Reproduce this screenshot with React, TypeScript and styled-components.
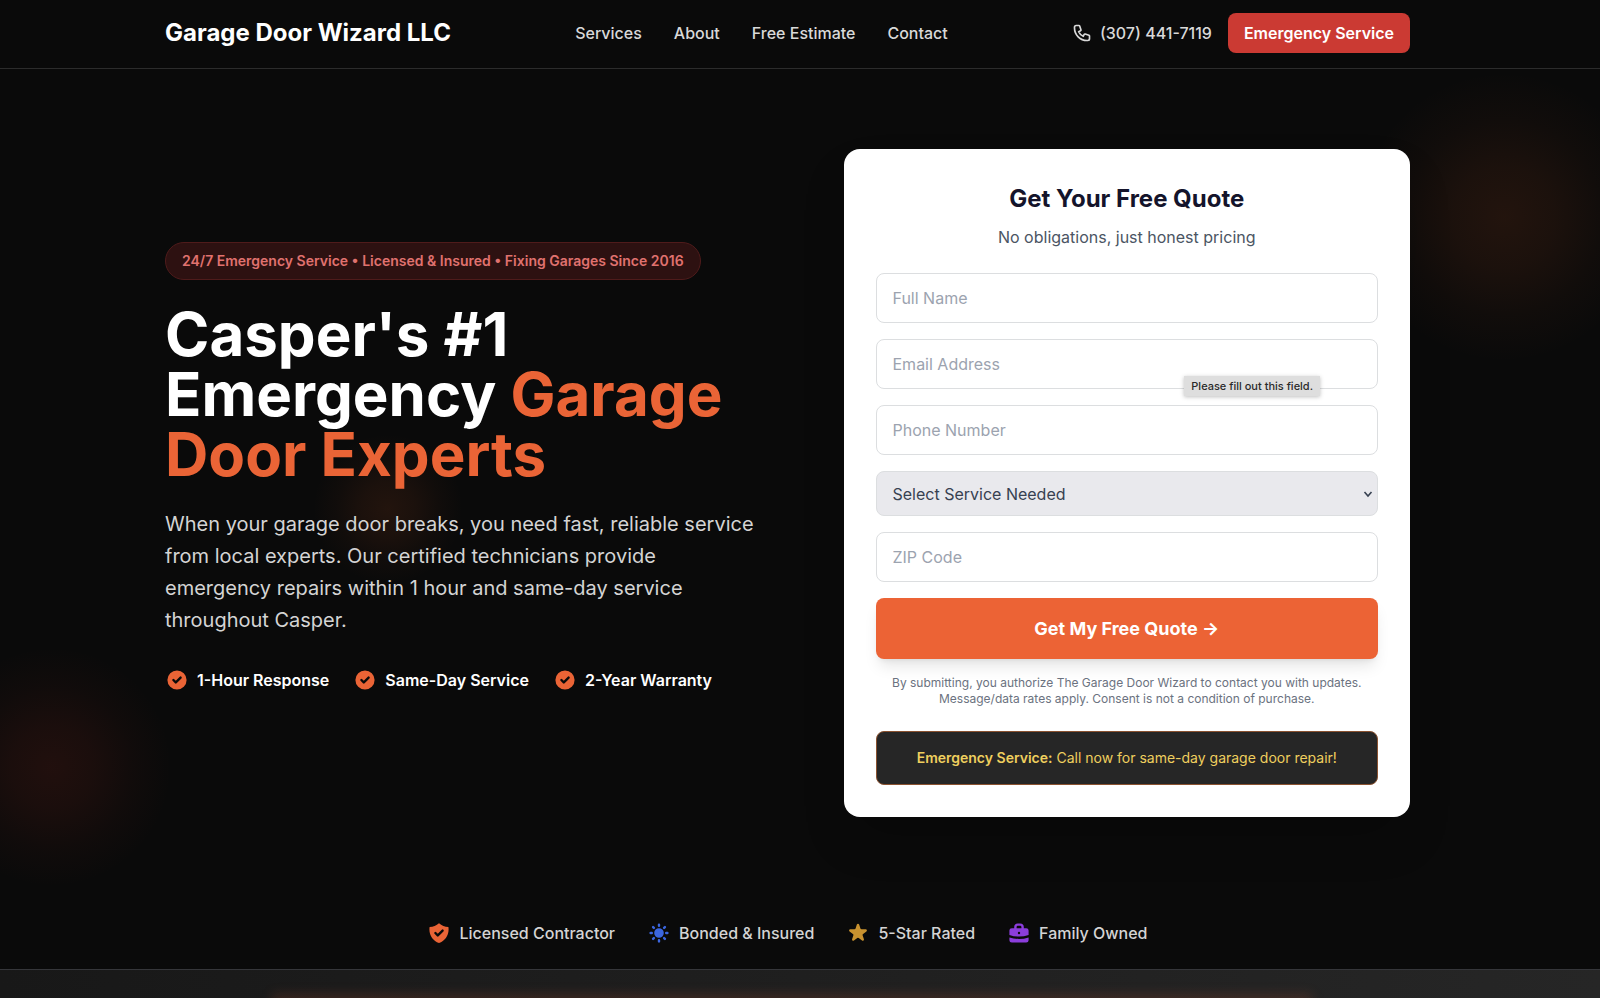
import React, { useState } from "react";
import styled, { createGlobalStyle, css } from "styled-components";

const GlobalStyle = createGlobalStyle`
  *, *::before, *::after { box-sizing: border-box; }
  body {
    margin: 0;
    background: #0a0a0a;
    color: #fff;
    font-family: Inter, "Liberation Sans", sans-serif;
    font-size: 16px;
    line-height: 24px;
    overflow-x: hidden;
  }
  h1, h2, p, ul { margin: 0; padding: 0; }
  a { color: inherit; text-decoration: none; }
  button, input, select { font: inherit; }
`;

const Page = styled.div`
  height: 100vh;
  overflow: hidden;
`;

const Container = styled.div`
  width: 100%;
  max-width: 1600px;
  margin: 0 auto;
  padding: 0 190px 0 165px;

  @media (max-width: 1400px) {
    padding: 0 32px;
  }
`;

const Header = styled.header`
  background: #0a0a0a;
  border-bottom: 1px solid #2c2c2c;
`;

const HeaderRow = styled(Container)`
  display: flex;
  align-items: center;
  justify-content: space-between;
  padding-top: 13px;
  padding-bottom: 15px;
`;

const Brand = styled.a`
  font-size: 24px;
  line-height: 32px;
  font-weight: 700;
`;

const Nav = styled.nav`
  display: flex;
  gap: 32px;
  color: #d9d9d9;
  font-weight: 500;
`;

const HeaderActions = styled.div`
  display: flex;
  align-items: center;
  gap: 16px;
`;

const PhoneLink = styled.a`
  display: flex;
  align-items: center;
  gap: 8px;
  color: #d9d9d9;
  font-weight: 500;
`;

const EmergencyButton = styled.button`
  border: 0;
  border-radius: 8px;
  padding: 8px 16px;
  background: #cb3a33;
  color: #fff;
  font-weight: 600;
`;

const Hero = styled.section`
  position: relative;
  overflow: hidden;
`;

const Glow = styled.div<{ $x: string; $y: string; $size: number; $rgb: string }>`
  position: absolute;
  left: ${(p) => p.$x};
  top: ${(p) => p.$y};
  width: ${(p) => p.$size}px;
  height: ${(p) => p.$size}px;
  transform: translate(-50%, -50%);
  border-radius: 50%;
  background: radial-gradient(
    closest-side,
    rgba(${(p) => p.$rgb}, 0.11),
    rgba(${(p) => p.$rgb}, 0.08) 35%,
    rgba(${(p) => p.$rgb}, 0.03) 68%,
    rgba(${(p) => p.$rgb}, 0)
  );
  pointer-events: none;
`;

const HeroGrid = styled(Container)`
  position: relative;
  display: grid;
  grid-template-columns: minmax(0, 590fr) minmax(0, 566fr);
  align-items: center;
  gap: 88px;
  padding-top: 80px;
  padding-bottom: 80px;

  @media (max-width: 1000px) {
    grid-template-columns: 1fr;
  }
`;

const Intro = styled.div`
  display: flex;
  flex-direction: column;
  align-items: flex-start;
  padding-bottom: 32px;
`;

const Badge = styled.p`
  padding: 8px 16px;
  border: 1px solid #4f1b1b;
  border-radius: 20px;
  background: #2d1111;
  color: #e0726f;
  font-size: 14px;
  line-height: 20px;
  font-weight: 600;
`;

const Headline = styled.h1`
  margin: 24px 0;
  font-size: 60px;
  line-height: 60px;
  font-weight: 700;
`;

const Accent = styled.span`
  color: #ea6436;
`;

const Lead = styled.p`
  margin-bottom: 32px;
  color: #d4d4d4;
  font-size: 20px;
  line-height: 32px;
`;

const InlineList = styled.ul<{ $gap: number }>`
  display: flex;
  flex-wrap: wrap;
  gap: 16px ${(p) => p.$gap}px;
  list-style: none;
`;

const InlineItem = styled.li<{ $muted?: boolean }>`
  display: flex;
  align-items: center;
  gap: 8px;
  color: ${(p) => (p.$muted ? "#d4d4d4" : "#fff")};
  font-weight: ${(p) => (p.$muted ? 500 : 600)};
`;

const Card = styled.form`
  padding: 32px;
  border-radius: 16px;
  background: #fff;
  color: #14142b;
  text-align: center;
  box-shadow: 0 25px 50px -12px rgba(0, 0, 0, 0.25);
`;

const CardTitle = styled.h2`
  margin-bottom: 8px;
  font-size: 24px;
  line-height: 36px;
  font-weight: 700;
`;

const CardSubtitle = styled.p`
  margin-bottom: 24px;
  color: #4b5563;
`;

const Fields = styled.div`
  display: flex;
  flex-direction: column;
  gap: 16px;
`;

const Field = styled.div`
  position: relative;
  display: flex;
`;

const control = css`
  width: 100%;
  border: 1px solid #dcdee0;
  border-radius: 8px;
  color: #374151;
`;

const TextInput = styled.input`
  ${control}
  padding: 12px 16px;
  background: #fff;

  &::placeholder {
    color: #9ca3af;
    opacity: 1;
  }
`;

const Select = styled.select`
  ${control}
  appearance: none;
  height: 45px;
  padding: 0 32px 0 16px;
  background: #e9e9ed;
`;

const Chevron = styled.svg`
  position: absolute;
  right: 5px;
  top: 18px;
  pointer-events: none;
`;

const Tooltip = styled.span`
  position: absolute;
  z-index: 1;
  right: 58px;
  top: 37px;
  padding: 2px 7px;
  background: #dedede;
  color: #2a2a2a;
  font-size: 11px;
  line-height: 16px;
  font-weight: 500;
  box-shadow: 0 1px 4px rgba(0, 0, 0, 0.25);
`;

const SubmitButton = styled.button`
  border: 0;
  border-radius: 8px;
  padding: 16px;
  background: #ec6335;
  color: #fff;
  font-size: 18px;
  line-height: 29px;
  font-weight: 700;
  box-shadow: 0 10px 15px -3px rgba(0, 0, 0, 0.1), 0 4px 6px -4px rgba(0, 0, 0, 0.1);
`;

const Disclaimer = styled.p`
  color: #6b7280;
  font-size: 12px;
  line-height: 16px;
`;

const Notice = styled.p`
  margin-top: 24px;
  padding: 16px;
  border: 1px solid #8a5230;
  border-radius: 8px;
  background: #262626;
  color: #efcf5e;
  font-size: 14px;
  line-height: 20px;

  strong { font-weight: 600; }
`;

const TrustBar = styled(Container)`
  position: relative;
  display: flex;
  justify-content: center;
  padding-top: 24px;
  padding-bottom: 24px;
`;

const NextSection = styled.section`
  position: relative;
  height: 400px;
  border-top: 1px solid #35363a;
  background: linear-gradient(90deg, #181818, #262626);
  overflow: hidden;
`;

const SectionGlow = styled.div`
  position: absolute;
  left: 17%;
  right: 18%;
  top: 24px;
  height: 240px;
  background: rgba(236, 99, 53, 0.15);
  filter: blur(6px);
`;

const iconProps = { width: 24, height: 24, viewBox: "0 0 20 20", fillRule: "evenodd", "aria-hidden": true } as const;

const PhoneIcon = () => (
  <svg width="20" height="20" viewBox="0 0 24 24" fill="none" stroke="currentColor" strokeWidth="2" strokeLinecap="round" strokeLinejoin="round" aria-hidden>
    <path d="M3 5a2 2 0 012-2h3.28a1 1 0 01.948.684l1.498 4.493a1 1 0 01-.502 1.21l-2.257 1.13a11.042 11.042 0 005.516 5.516l1.13-2.257a1 1 0 011.21-.502l4.493 1.498a1 1 0 01.684.949V19a2 2 0 01-2 2h-1C9.716 21 3 14.284 3 6V5z" />
  </svg>
);

const CheckIcon = () => (
  <svg {...iconProps} fill="#ea6436">
    <path d="M10 18a8 8 0 100-16 8 8 0 000 16zm3.707-9.293a1 1 0 00-1.414-1.414L9 10.586 7.707 9.293a1 1 0 00-1.414 1.414l2 2a1 1 0 001.414 0l4-4z" />
  </svg>
);

const ShieldIcon = () => (
  <svg {...iconProps} fill="#ea6436">
    <path d="M2.166 4.999A11.954 11.954 0 0010 1.944 11.954 11.954 0 0017.834 5c.11.65.166 1.32.166 2.001 0 5.225-3.34 9.67-8 11.317C5.34 16.67 2 12.225 2 7c0-.682.057-1.35.166-2.001zm11.541 3.708a1 1 0 00-1.414-1.414L9 10.586 7.707 9.293a1 1 0 00-1.414 1.414l2 2a1 1 0 001.414 0l4-4z" />
  </svg>
);

const SunIcon = () => (
  <svg {...iconProps} fill="#3b66e0">
    <path d="M10 2a1 1 0 011 1v1a1 1 0 11-2 0V3a1 1 0 011-1zm4 8a4 4 0 11-8 0 4 4 0 018 0zm-.464 4.95l.707.707a1 1 0 001.414-1.414l-.707-.707a1 1 0 00-1.414 1.414zm2.12-10.607a1 1 0 010 1.414l-.706.707a1 1 0 11-1.414-1.414l.707-.707a1 1 0 011.414 0zM17 11a1 1 0 100-2h-1a1 1 0 100 2h1zm-7 4a1 1 0 011 1v1a1 1 0 11-2 0v-1a1 1 0 011-1zM5.05 6.464A1 1 0 106.465 5.05l-.708-.707a1 1 0 00-1.414 1.414l.707.707zm1.414 8.486l-.707.707a1 1 0 01-1.414-1.414l.707-.707a1 1 0 011.414 1.414zM4 11a1 1 0 100-2H3a1 1 0 000 2h1z" />
  </svg>
);

const StarIcon = () => (
  <svg {...iconProps} fill="#c8922f">
    <path d="M9.049 2.927c.3-.921 1.603-.921 1.902 0l1.07 3.292a1 1 0 00.95.69h3.462c.969 0 1.371 1.24.588 1.81l-2.8 2.034a1 1 0 00-.364 1.118l1.07 3.292c.3.921-.755 1.688-1.54 1.118l-2.8-2.034a1 1 0 00-1.175 0l-2.8 2.034c-.784.57-1.838-.197-1.539-1.118l1.07-3.292a1 1 0 00-.364-1.118L2.98 8.72c-.783-.57-.38-1.81.588-1.81h3.461a1 1 0 00.951-.69l1.07-3.292z" />
  </svg>
);

const BriefcaseIcon = () => (
  <svg {...iconProps} fill="#8b3ddb">
    <path d="M6 6V5a3 3 0 013-3h2a3 3 0 013 3v1h2a2 2 0 012 2v3.57A22.952 22.952 0 0110 13a22.95 22.95 0 01-8-1.43V8a2 2 0 012-2h2zm2-1a1 1 0 011-1h2a1 1 0 011 1v1H8V5zm1 5a1 1 0 011-1h.01a1 1 0 110 2H10a1 1 0 01-1-1z" />
    <path d="M2 13.692V16a2 2 0 002 2h12a2 2 0 002-2v-2.308A24.974 24.974 0 0110 15c-2.796 0-5.487-.46-8-1.308z" />
  </svg>
);

const navLinks = ["Services", "About", "Free Estimate", "Contact"];
const benefits = ["1-Hour Response", "Same-Day Service", "2-Year Warranty"];
const trust = [
  { label: "Licensed Contractor", Icon: ShieldIcon },
  { label: "Bonded & Insured", Icon: SunIcon },
  { label: "5-Star Rated", Icon: StarIcon },
  { label: "Family Owned", Icon: BriefcaseIcon },
];

export default function App() {
  const [service, setService] = useState("");

  return (
    <Page>
      <GlobalStyle />
      <Header>
        <HeaderRow>
          <Brand href="#">Garage Door Wizard LLC</Brand>
          <Nav>
            {navLinks.map((label) => (
              <a key={label} href="#">{label}</a>
            ))}
          </Nav>
          <HeaderActions>
            <PhoneLink href="tel:+13074417119">
              <PhoneIcon />
              (307) 441-7119
            </PhoneLink>
            <EmergencyButton type="button">Emergency Service</EmergencyButton>
          </HeaderActions>
        </HeaderRow>
      </Header>
      <main>
        <Hero>
          <Glow $x="94%" $y="148px" $size={290} $rgb="234, 100, 40" />
          <Glow $x="52px" $y="698px" $size={240} $rgb="220, 60, 40" />
          <Glow $x="388px" $y="440px" $size={150} $rgb="234, 100, 40" />
          <HeroGrid>
            <Intro>
              <Badge>24/7 Emergency Service • Licensed &amp; Insured • Fixing Garages Since 2016</Badge>
              <Headline>
                Casper's #1 Emergency <Accent>Garage Door Experts</Accent>
              </Headline>
              <Lead>
                When your garage door breaks, you need fast, reliable service from local experts. Our
                certified technicians provide emergency repairs within 1 hour and same-day service
                throughout Casper.
              </Lead>
              <InlineList $gap={24}>
                {benefits.map((label) => (
                  <InlineItem key={label}>
                    <CheckIcon />
                    {label}
                  </InlineItem>
                ))}
              </InlineList>
            </Intro>
            <Card onSubmit={(e) => e.preventDefault()}>
              <CardTitle>Get Your Free Quote</CardTitle>
              <CardSubtitle>No obligations, just honest pricing</CardSubtitle>
              <Fields>
                <Field>
                  <TextInput aria-label="Full Name" placeholder="Full Name" required />
                </Field>
                <Field>
                  <TextInput type="email" aria-label="Email Address" placeholder="Email Address" required />
                  <Tooltip role="tooltip">Please fill out this field.</Tooltip>
                </Field>
                <Field>
                  <TextInput type="tel" aria-label="Phone Number" placeholder="Phone Number" required />
                </Field>
                <Field>
                  <Select
                    aria-label="Service needed"
                    value={service}
                    onChange={(e) => setService(e.target.value)}
                  >
                    <option value="">Select Service Needed</option>
                  </Select>
                  <Chevron width="10" height="10" viewBox="0 0 10 10" fill="none" stroke="#374151" strokeWidth="1.6" aria-hidden>
                    <path d="M1.5 3l3.5 4 3.5-4" />
                  </Chevron>
                </Field>
                <Field>
                  <TextInput aria-label="ZIP Code" placeholder="ZIP Code" required />
                </Field>
                <SubmitButton type="submit">Get My Free Quote →</SubmitButton>
                <Disclaimer>
                  By submitting, you authorize The Garage Door Wizard to contact you with updates.
                  Message/data rates apply. Consent is not a condition of purchase.
                </Disclaimer>
              </Fields>
              <Notice>
                <strong>Emergency Service:</strong> Call now for same-day garage door repair!
              </Notice>
            </Card>
          </HeroGrid>
          <TrustBar>
            <InlineList $gap={32}>
              {trust.map(({ label, Icon }) => (
                <InlineItem key={label} $muted>
                  <Icon />
                  {label}
                </InlineItem>
              ))}
            </InlineList>
          </TrustBar>
        </Hero>
        <NextSection>
          <SectionGlow />
        </NextSection>
      </main>
    </Page>
  );
}
